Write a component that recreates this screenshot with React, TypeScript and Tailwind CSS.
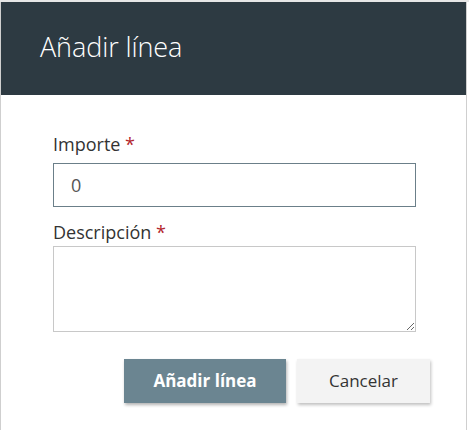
export default function App() {
  return (
    <div className="w-[469px] h-[432px] bg-white border-t-2 border-[#e6e6e6] font-['Open_Sans',sans-serif]">
      <div className="w-[467px] h-[428px] bg-white border-l border-r border-[#cfcfcf] flex flex-col">
        <div className="h-[93px] bg-[#2d3a42] flex items-center pl-[39px] pb-[2px]">
          <h1 className="text-[27px] font-light text-white tracking-[-0.1px]">Añadir línea</h1>
        </div>
        <div className="flex flex-col px-[52px] pt-[38px]">
          <label className="text-[18px] text-[#333] leading-[22px]">
            Importe <span className="text-[#b3262c]">*</span>
          </label>
          <input
            defaultValue="0"
            className="mt-[8px] h-[44px] w-[363px] border border-[#6b7f89] px-[17px] text-[18px] text-[#555] outline-none"
          />
          <label className="mt-[14px] text-[18px] text-[#333] leading-[22px]">
            Descripción <span className="text-[#b3262c]">*</span>
          </label>
          <textarea className="mt-[3px] h-[86px] w-[363px] border border-[#c8c8c8] outline-none resize-y" />
          <div className="flex justify-end gap-[11px] mt-[27px] mr-[-16px]">
            <button className="w-[162px] h-[44px] bg-[#6b8591] text-white text-[17px] font-bold shadow-[1px_2px_3px_rgba(0,0,0,0.3)]">
              Añadir línea
            </button>
            <button className="w-[133px] h-[44px] bg-[#f3f3f3] text-[#333] text-[17px] shadow-[1px_2px_3px_rgba(0,0,0,0.25)]">
              Cancelar
            </button>
          </div>
        </div>
      </div>
    </div>
  );
}
